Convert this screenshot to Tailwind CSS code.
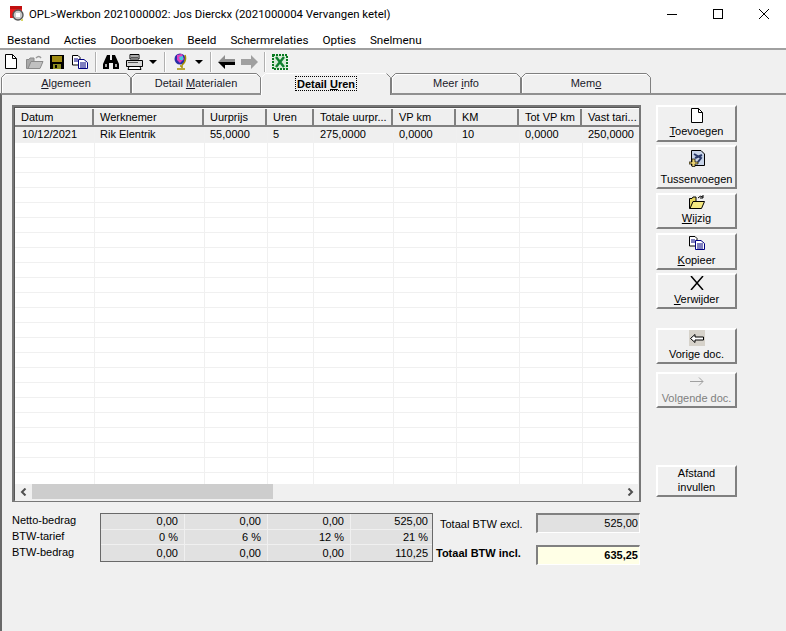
<!DOCTYPE html>
<html lang="en">
<head>
  <meta charset="UTF-8" />
  <title>OPL Werkbon</title>
  <script src="https://cdn.jsdelivr.net/npm/@tailwindcss/browser@4"></script>
</head>
<body class="bg-[#f0f0f0] w-[786px] h-[631px] overflow-hidden flex flex-col text-[11px] leading-[13px] text-black font-['Liberation_Sans',Arial,sans-serif]">

  <!-- Title bar -->
  <div class="h-[27px] bg-white flex items-center shrink-0 relative">
    <svg class="ml-[10px] w-[15px] h-[16px]" viewBox="0 0 15 16">
      <rect x="0" y="0" width="12" height="12" fill="#e81c1c"/>
      <rect x="0" y="0" width="12" height="3" fill="#c01010"/>
      <circle cx="8" cy="9" r="5" fill="#c8c8c8" stroke="#555" stroke-width="1.4"/>
      <rect x="6" y="7" width="4" height="4" fill="#fff"/>
      <rect x="11" y="13" width="2" height="2" fill="#d8d860"/>
    </svg>
    <span class="ml-[4px] mt-[2px] font-['Roboto',sans-serif] text-[11.4px]">OPL&gt;Werkbon 2021000002: Jos Dierckx (2021000004 Vervangen ketel)</span>
    <div class="ml-auto flex">
      <button class="w-[46px] h-[27px] flex items-center justify-center"><svg class="w-[10px] h-[10px]" viewBox="0 0 10 10"><path d="M0 5.5H10" stroke="#000"/></svg></button>
      <button class="w-[46px] h-[27px] flex items-center justify-center"><svg class="w-[10px] h-[10px]" viewBox="0 0 10 10"><rect x=".5" y=".5" width="9" height="9" fill="none" stroke="#000"/></svg></button>
      <button class="w-[46px] h-[27px] flex items-center justify-center mr-[-1px]"><svg class="w-[10px] h-[10px]" viewBox="0 0 10 10"><path d="M0 0L10 10M10 0L0 10" stroke="#000"/></svg></button>
    </div>
  </div>

  <!-- Menu -->
  <div class="h-[23px] pt-[6px] bg-white flex items-center gap-[14px] pl-[7px] shrink-0 font-['Roboto',sans-serif] text-[11.7px] border-b-2 border-[#a0a0a0]">
    <span>Bestand</span><span>Acties</span><span>Doorboeken</span><span>Beeld</span><span>Schermrelaties</span><span>Opties</span><span>Snelmenu</span>
  </div>

  <!-- Toolbar -->
  <div class="h-[23px] flex items-center shrink-0 pl-[5px]">
    <svg class="w-[12px] h-[15px]" viewBox="0 0 12 15"><path d="M.5.5H7.5L11.5 4.5V14.5H.5Z" fill="#fff" stroke="#000"/><path d="M7.5.5V4.5H11.5" fill="none" stroke="#000"/></svg>
    <svg class="ml-[9px] w-[18px] h-[14px]" viewBox="0 0 18 14"><path d="M.5 4.5H3L4 3H8V13.5H.5Z" fill="#a9a9a9" stroke="#8a8a8a"/><path d="M2 13.5L5 6.5H17L14 13.5Z" fill="#c0c0c0" stroke="#8a8a8a"/><path d="M10 3Q13 0 15 3" fill="none" stroke="#999" stroke-width="1.4"/></svg>
    <svg class="ml-[6px] w-[14px] h-[14px]" viewBox="0 0 14 14"><rect width="14" height="14" fill="#000"/><rect x="2" y="1" width="10" height="6" fill="#a08c14"/><rect x="3" y="9" width="8" height="5" fill="#8c8c20"/><rect x="5" y="10" width="2" height="3" fill="#000"/></svg>
    <svg class="ml-[8px] w-[16px] h-[14px]" viewBox="0 0 16 14"><path d="M.5.5H6L8 2.500V10H.5Z" fill="#fff" stroke="#000"/><path d="M6.500 4.500H12L15.500 7.500V13.500H6.500Z" fill="#fff" stroke="#000080"/><path d="M2 4H6M2 6H6M8 8H14M8 10H14M8 12H14" stroke="#000080"/></svg>
    <div class="ml-[7px] w-[2px] h-[20px] bg-[#b0b0b0] border-r border-white"></div>
    <svg class="ml-[6px] w-[16px] h-[14px]" viewBox="0 0 16 14"><path d="M4 0H7V5H9V0H12L16 9V14H10V8H6V14H0V9Z" fill="#000"/><rect x="2" y="9" width="2" height="3" fill="#aaa"/><rect x="12" y="9" width="2" height="3" fill="#aaa"/></svg>
    <svg class="ml-[7px] w-[17px] h-[16px]" viewBox="0 0 17 16"><path d="M4 .5H13V5H4Z" fill="#fff" stroke="#000"/><path d="M.5 6.500H16.500V12.500H.5Z" fill="#d8d8d8" stroke="#000"/><path d="M3 12.500H14L15 15.500H2Z" fill="#fff" stroke="#000"/><path d="M5 2H12M5 3.500H12M2 8.500H12" stroke="#555"/></svg>
    <svg class="ml-[6px] w-[8px] h-[4px]" viewBox="0 0 8 4"><path d="M0 0H8L4 4Z" fill="#000"/></svg>
    <div class="ml-[7px] w-[2px] h-[20px] bg-[#b0b0b0] border-r border-white"></div>
    <svg class="ml-[8px] w-[13px] h-[17px]" viewBox="0 0 13 17"><circle cx="6" cy="6" r="5.500" fill="#2830a8"/><path d="M3 2L8 1L10 6L6 10L3 7Z" fill="#e040c0"/><path d="M5 4L9 3V7H6Z" fill="#40c8e0"/><path d="M11 2Q13 8 8 12M6 13H8V15M3 16H11" fill="none" stroke="#a89000" stroke-width="1.500"/></svg>
    <svg class="ml-[8px] w-[8px] h-[4px]" viewBox="0 0 8 4"><path d="M0 0H8L4 4Z" fill="#000"/></svg>
    <div class="ml-[7px] w-[2px] h-[20px] bg-[#b0b0b0] border-r border-white"></div>
    <svg class="ml-[6px] w-[17px] h-[14px]" viewBox="0 0 17 14"><path d="M0 7L7 0V4H17V7H0Z" fill="#909090"/><path d="M0 7L7 14V10H17V7Z" fill="#000"/></svg>
    <svg class="ml-[6px] w-[17px] h-[14px]" viewBox="0 0 17 14"><path d="M17 7L10 0V4H0V10H10V14Z" fill="#a0a0a0"/></svg>
    <div class="ml-[6px] w-[2px] h-[20px] bg-[#b0b0b0] border-r border-white"></div>
    <svg class="ml-[6px] w-[16px] h-[16px]" viewBox="0 0 16 16"><rect x="1" y="1" width="14" height="14" fill="#d8ecd8" stroke="#0a7a20" stroke-width="2" stroke-dasharray="2 1"/><path d="M4 3L12 13M12 3L4 13" stroke="#108030" stroke-width="2.500"/></svg>
  </div>

  <!-- Tabs -->
  <div class="h-[20px] flex shrink-0 pl-[1px] relative z-10 text-[#1a1a2a]">
    <div class="relative w-[130px] h-[20px] flex items-center justify-center">
      <svg class="absolute inset-0 w-[130px] h-[20px]" viewBox="0 0 130 20"><path d="M.5 20V4.500L4.500 .5H125.500L129.500 4.500V20" fill="#f0f0f0" stroke="#808080"/><path d="M1.500 20V5L5 1.500H125" fill="none" stroke="#fff"/></svg>
      <span class="relative"><u>A</u>lgemeen</span>
    </div>
    <div class="relative w-[130px] h-[20px] flex items-center justify-center">
      <svg class="absolute inset-0 w-[130px] h-[20px]" viewBox="0 0 130 20"><path d="M.5 20V4.500L4.500 .5H125.500L129.500 4.500V20" fill="#f0f0f0" stroke="#808080"/><path d="M1.500 20V5L5 1.500H125" fill="none" stroke="#fff"/></svg>
      <span class="relative">Detail <u>M</u>aterialen</span>
    </div>
    <div class="relative w-[130px] h-[22px] pb-[1px] flex items-center justify-center font-bold text-black">
      <svg class="absolute inset-0 w-[130px] h-[22px]" viewBox="0 0 130 22"><path d="M.5 22V4.500L4.500 .5H125.500L129.500 4.500V22" fill="#f0f0f0" stroke="#fff"/><path d="M125.500 .5L129.500 4.500V22" fill="none" stroke="#808080"/></svg>
      <span class="relative border border-dotted border-black px-[1px] h-[15px] leading-[14px]">Detail <u>U</u>ren</span>
    </div>
    <div class="relative w-[130px] h-[20px] flex items-center justify-center">
      <svg class="absolute inset-0 w-[130px] h-[20px]" viewBox="0 0 130 20"><path d="M.5 20V4.500L4.500 .5H125.500L129.500 4.500V20" fill="#f0f0f0" stroke="#808080"/><path d="M1.500 20V5L5 1.500H125" fill="none" stroke="#fff"/></svg>
      <span class="relative">Meer <u>i</u>nfo</span>
    </div>
    <div class="relative w-[130px] h-[20px] flex items-center justify-center">
      <svg class="absolute inset-0 w-[130px] h-[20px]" viewBox="0 0 130 20"><path d="M.5 20V4.500L4.500 .5H125.500L129.500 4.500V20" fill="#f0f0f0" stroke="#808080"/><path d="M1.500 20V5L5 1.500H125" fill="none" stroke="#fff"/></svg>
      <span class="relative">Mem<u>o</u></span>
    </div>
  </div>

  <!-- Panel -->
  <div class="flex-1 flex border-l-2 border-t-2 border-l-[#696969] border-t-[#909090] pl-[10px] pt-[10px]">
    <div class="w-[629px]">
      <!-- Grid -->
      <div class="h-[397px] border-2 border-[#777777] flex flex-col bg-white">
        <div class="flex-1 flex flex-col border-l border-t border-[#555555] pt-[1px] min-h-0">
          <div class="flex h-[18px] shrink-0 bg-[#efefef]">
            <div class="w-[79px] pl-[6px] flex items-center border-r-2 border-b-2 border-[#808080]">Datum</div>
            <div class="w-[110px] pl-[6px] flex items-center border-r-2 border-b-2 border-[#808080]">Werknemer</div>
            <div class="w-[63px] pl-[6px] flex items-center border-r-2 border-b-2 border-[#808080]">Uurprijs</div>
            <div class="w-[47px] pl-[6px] flex items-center border-r-2 border-b-2 border-[#808080]">Uren</div>
            <div class="w-[79px] pl-[6px] flex items-center border-r-2 border-b-2 border-[#808080]">Totale uurpr...</div>
            <div class="w-[63px] pl-[6px] flex items-center border-r-2 border-b-2 border-[#808080]">VP km</div>
            <div class="w-[63px] pl-[6px] flex items-center border-r-2 border-b-2 border-[#808080]">KM</div>
            <div class="w-[63px] pl-[6px] flex items-center border-r-2 border-b-2 border-[#808080]">Tot VP km</div>
            <div class="flex-1 pl-[6px] flex items-center border-b-2 border-[#808080]">Vast tari...</div>
          </div>
          <div id="rows" class="h-[357px] overflow-hidden shrink-0"></div>
          <!-- Scrollbar -->
          <div class="h-[15px] flex items-stretch shrink-0 bg-[#f0f0f0]">
            <div class="w-[17px] flex items-center justify-center"><svg class="w-[7px] h-[8px]" viewBox="0 0 7 8"><path d="M5.500 .5L2 4L5.500 7.500" fill="none" stroke="#505050" stroke-width="2"/></svg></div>
            <div class="w-[241px] bg-[#cdcdcd]"></div>
            <div class="flex-1"></div>
            <div class="w-[17px] flex items-center justify-center"><svg class="w-[7px] h-[8px]" viewBox="0 0 7 8"><path d="M1.500 .5L5 4L1.500 7.500" fill="none" stroke="#505050" stroke-width="2"/></svg></div>
          </div>
          <div class="h-[2px] bg-[#f0f0f0] shrink-0"></div>
        </div>
      </div>

      <!-- Totals -->
      <div class="flex mt-[11px]">
        <div class="w-[88px] -mt-[1px] flex flex-col">
          <div class="h-[16px] flex items-center">Netto-bedrag</div>
          <div class="h-[16px] flex items-center">BTW-tarief</div>
          <div class="h-[16px] flex items-center">BTW-bedrag</div>
        </div>
        <div class="w-[333px] h-[49px] border border-[#696969] bg-[#e1e1e1] grid grid-cols-[84px_83px_83px_1fr] grid-rows-[16px_15px_16px] text-right">
          <div class="pr-[6px] flex items-center justify-end border-r border-b border-[#f0f0f0]">0,00</div>
          <div class="pr-[6px] flex items-center justify-end border-r border-b border-[#f0f0f0]">0,00</div>
          <div class="pr-[6px] flex items-center justify-end border-r border-b border-[#f0f0f0]">0,00</div>
          <div class="pr-[4px] flex items-center justify-end border-b border-[#f0f0f0]">525,00</div>
          <div class="pr-[6px] flex items-center justify-end border-r border-b border-[#f0f0f0]">0 %</div>
          <div class="pr-[6px] flex items-center justify-end border-r border-b border-[#f0f0f0]">6 %</div>
          <div class="pr-[6px] flex items-center justify-end border-r border-b border-[#f0f0f0]">12 %</div>
          <div class="pr-[4px] flex items-center justify-end border-b border-[#f0f0f0]">21 %</div>
          <div class="pr-[6px] flex items-center justify-end border-r border-[#f0f0f0]">0,00</div>
          <div class="pr-[6px] flex items-center justify-end border-r border-[#f0f0f0]">0,00</div>
          <div class="pr-[6px] flex items-center justify-end border-r border-[#f0f0f0]">0,00</div>
          <div class="pr-[4px] flex items-center justify-end">110,25</div>
        </div>
        <div class="ml-[3px] w-[100px] flex flex-col">
          <div class="h-[20px] pl-[4px] mt-[1px] flex items-center">Totaal BTW excl.</div>
          <div class="h-[20px] mt-[9px] flex items-center font-bold">Totaal BTW incl.</div>
        </div>
        <div class="w-[104px] flex flex-col">
          <div class="h-[20px] border-l-2 border-t-2 border-r border-b border-l-[#808080] border-t-[#808080] border-r-white border-b-white bg-[#e1e1e1] flex items-center justify-end pr-[1px]">525,00</div>
          <div class="h-[20px] mt-[12px] border-l-2 border-t-2 border-r border-b border-l-[#808080] border-t-[#808080] border-r-white border-b-white bg-[#ffffe6] flex items-center justify-end pr-[1px] font-bold">635,25</div>
        </div>
      </div>
    </div>

    <!-- Buttons -->
    <div class="ml-[15px] w-[81px] flex flex-col">
      <button class="h-[37px] flex flex-col items-center border-2 border-t-white border-l-white border-r-[#808080] border-b-[#808080] bg-[#f0f0f0]">
        <svg class="mt-[1px] w-[12px] h-[15px]" viewBox="0 0 12 15"><path d="M.5.5H7.500L11.500 4.500V14.500H.5Z" fill="#fff" stroke="#000"/><path d="M7.500.5V4.500H11.500" fill="none" stroke="#000"/></svg>
        <span class="mt-[2px]"><u>T</u>oevoegen</span>
      </button>
      <button class="mt-[3px] h-[44px] flex flex-col items-center border-2 border-t-white border-l-white border-r-[#808080] border-b-[#808080] bg-[#f0f0f0]">
        <svg class="mt-[3px] w-[16px] h-[17px]" viewBox="0 0 16 17"><path d="M2.500.5H12L15.500 4V15.500H2.500Z" fill="#c8d4e8" stroke="#000"/><path d="M5 4L12 8L9 12M6 8L13 5" fill="none" stroke="#2a3a6a" stroke-width="2"/><path d="M3 9H6V12H9V14H6V16.500H3V14H0V12H3Z" fill="#e8d070" stroke="#000" stroke-width=".7"/></svg>
        <span class="mt-[6px]">Tussenvoegen</span>
      </button>
      <button class="mt-[4px] h-[36px] flex flex-col items-center border-2 border-t-white border-l-white border-r-[#808080] border-b-[#808080] bg-[#f0f0f0]">
        <svg class="mt-[0px] w-[16px] h-[14px]" viewBox="0 0 16 14"><path d="M.5 3.500H3L4 2H7V13.500H.5Z" fill="#e8d860" stroke="#000"/><path d="M1 13.500L4 6.500H15.500L12.500 13.500Z" fill="#f4e880" stroke="#000"/><path d="M9 3Q11 0 14 2M14 0V3H11" fill="none" stroke="#000"/></svg>
        <span class="mt-[3px]"><u>W</u>ijzig</span>
      </button>
      <button class="mt-[4px] h-[37px] flex flex-col items-center border-2 border-t-white border-l-white border-r-[#808080] border-b-[#808080] bg-[#f0f0f0]">
        <svg class="mt-[1px] w-[16px] h-[14px]" viewBox="0 0 16 14"><path d="M.5.5H6L8 2.500V10H.5Z" fill="#fff" stroke="#000"/><path d="M6.500 4.500H12L15.500 7.500V13.500H6.500Z" fill="#fff" stroke="#000080"/><path d="M2 4H6M2 6H6M8 8H14M8 10H14M8 12H14" stroke="#000080"/></svg>
        <span class="mt-[4px]"><u>K</u>opieer</span>
      </button>
      <button class="mt-[3px] h-[36px] flex flex-col items-center border-2 border-t-white border-l-white border-r-[#808080] border-b-[#808080] bg-[#f0f0f0]">
        <svg class="mt-[1px] w-[14px] h-[14px]" viewBox="0 0 14 14"><path d="M1 0L13 14M13 0L1 14" stroke="#000" stroke-width="1.500"/></svg>
        <span class="mt-[3px]"><u>V</u>erwijder</span>
      </button>
      <button class="mt-[19px] h-[36px] flex flex-col items-center border-2 border-t-white border-l-white border-r-[#808080] border-b-[#808080] bg-[#f0f0f0]">
        <div class="w-[16px] h-[16px] bg-[#d6d2ca] flex items-center justify-center"><svg class="w-[14px] h-[9px]" viewBox="0 0 14 9"><path d="M.5 4.500L5 .5V3H13.500V6H5V8.500Z" fill="#fff" stroke="#000"/></svg></div>
        <span class="mt-[2px]">Vorige doc.</span>
      </button>
      <button class="mt-[8px] h-[36px] flex flex-col items-center border-2 border-t-white border-l-white border-r-[#808080] border-b-[#808080] bg-[#f0f0f0] text-[#808080]">
        <svg class="mt-[3px] w-[14px] h-[9px]" viewBox="0 0 14 9"><path d="M0 4.500H13M9 .5L13 4.500L9 8.500" fill="none" stroke="#a0a0a0"/></svg>
        <span class="mt-[6px]">Volgende doc.</span>
      </button>
      <button class="mt-[57px] h-[32px] pb-[2px] flex flex-col items-center justify-center leading-[14px] border-2 border-t-white border-l-white border-r-[#808080] border-b-[#808080] bg-[#f0f0f0]">
        <span>Afstand</span><span>invullen</span>
      </button>
    </div>
  </div>

  <script>
    const cols = ['w-[80px] pl-[7px]', 'w-[110px] pl-[5px]', 'w-[63px] pl-[5px]', 'w-[46px] pl-[5px]', 'w-[80px] pl-[6px]', 'w-[63px] pl-[5px]', 'w-[63px] pl-[5px]', 'w-[63px] pl-[5px]', 'w-[56px] pl-[5px]'];
    const data = ['10/12/2021', 'Rik Elentrik', '55,0000', '5', '275,0000', '0,0000', '10', '0,0000', '250,0000'];
    const rowsEl = document.getElementById('rows');

    // First row is the selected one, the rest of the grid is empty
    for (let r = 0; r < 24; r++) {
      const row = document.createElement('div');
      row.className = r === 0 ? 'flex h-[16px] bg-[#efefef] border-b border-[#f0f0f0]' : 'flex h-[15px] border-b border-[#f0f0f0]';
      cols.forEach((c, i) => {
        const cell = document.createElement('div');
        cell.className = c + ' whitespace-nowrap overflow-hidden flex items-center border-r border-[#f0f0f0]';
        if (r === 0) cell.textContent = data[i];
        row.appendChild(cell);
      });
      rowsEl.appendChild(row);
    }
  </script>
</body>
</html>
